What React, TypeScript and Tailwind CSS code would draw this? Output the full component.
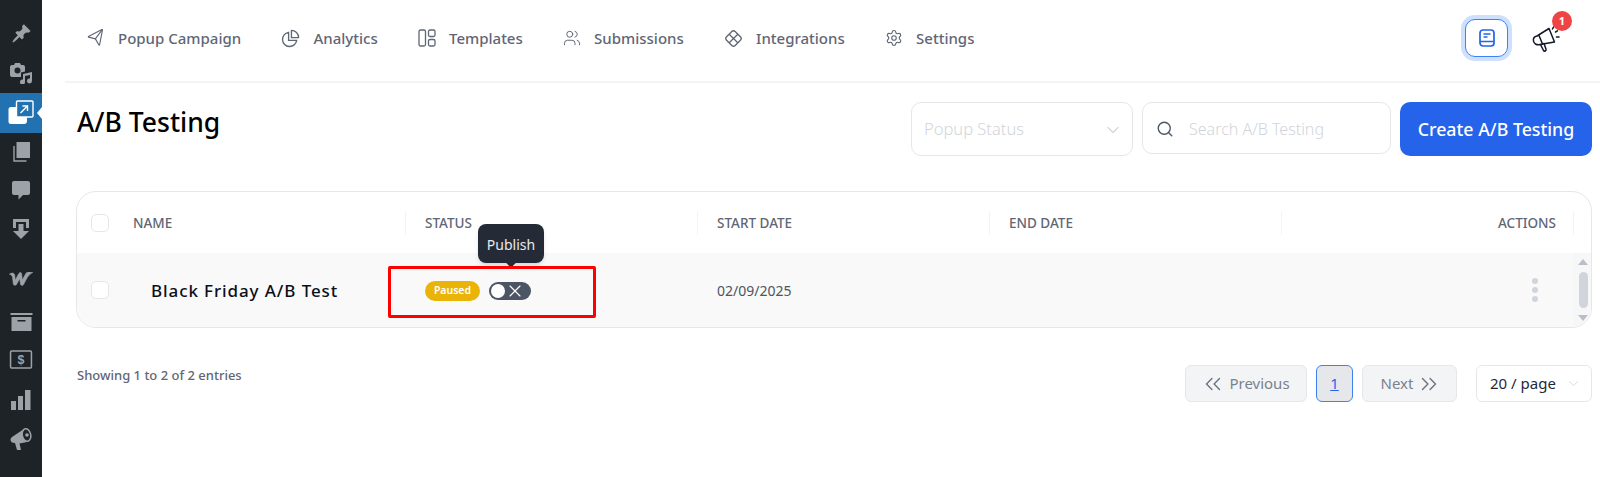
import { ChevronDown, ChevronsLeft, ChevronsRight, Search, Send, Settings, Users, X } from 'lucide-react'

const font = "font-['Noto_Sans',sans-serif]"

function PinIcon() {
  return (
    <svg viewBox="0 0 20 20" className="h-[21px] w-[21px] fill-[#9ca2a7]">
      <path d="M10.44 3.02l1.82-1.82 6.36 6.35-1.83 1.82c-1.05-.68-2.48-.57-3.41.36l-.75.75c-.92.93-1.04 2.35-.35 3.41l-1.83 1.82-2.41-2.41-2.8 2.79c-.42.42-3.38 2.71-3.8 2.29s1.86-3.39 2.28-3.81l2.79-2.79L4.1 9.36l1.83-1.82c1.05.69 2.48.57 3.4-.36l.75-.75c.93-.92 1.05-2.35.36-3.41z" />
    </svg>
  )
}

function MediaIcon() {
  return (
    <svg viewBox="0 0 24 22" className="h-[22px] w-6 fill-[#9ca2a7]">
      <path fillRule="evenodd" d="M3 3h2l1-2h5l1 2h2a2 2 0 0 1 2 2v4.500l-4 1V15H3a2 2 0 0 1-2-2V5a2 2 0 0 1 2-2zm5.500 2.500a3 3 0 1 0 0 6 3 3 0 0 0 0-6z" />
      <path d="M14 12l9-2v9a2.500 2.500 0 1 1-2-2.400v-3.700l-5 1V20a2.500 2.500 0 1 1-2-2.400z" />
    </svg>
  )
}

function ActiveIcon() {
  return (
    <svg viewBox="0 0 26 26" className="h-[26px] w-[26px]">
      <path className="fill-white" d="M3 7h16v14a3 3 0 0 1-3 3H3a2.500 2.500 0 0 1-2.500-2.500v-12A2.500 2.500 0 0 1 3 7z" />
      <rect x="8.500" y="1" width="16.500" height="16" rx="1" className="fill-[#2271b1] stroke-white" strokeWidth="1.400" />
      <path d="M12.500 13l7-7M14.500 6h5v5" className="fill-none stroke-white" strokeWidth="1.400" />
    </svg>
  )
}

function PagesIcon() {
  return (
    <svg viewBox="0 0 20 20" className="h-5 w-5">
      <path className="fill-[#9ca2a7]" d="M5.500 0h13.500v16H5.500z" />
      <path className="fill-none stroke-[#9ca2a7]" strokeWidth="1.400" d="M3 4v15h12.500" />
    </svg>
  )
}

function CommentIcon() {
  return (
    <svg viewBox="0 0 20 20" className="h-5 w-5 fill-[#9ca2a7]">
      <path d="M3 1h14a2 2 0 0 1 2 2v10a2 2 0 0 1-2 2h-5l-4.500 4.500V15H3a2 2 0 0 1-2-2V3a2 2 0 0 1 2-2z" />
    </svg>
  )
}

function ImportIcon() {
  return (
    <svg viewBox="0 0 20 20" className="h-5 w-5 fill-[#9ca2a7]">
      <path d="M2 0h16v9h-3V3H5v6H2z" />
      <path d="M7.500 5h5v7H18l-8 8-8-8h5.500z" />
    </svg>
  )
}

function WooIcon() {
  return (
    <svg viewBox="0 0 26 14" className="h-[14px] w-[25px] fill-[#9ca2a7] stroke-[#9ca2a7]" strokeWidth="0.600">
      <path d="M.5 2C2 .6 4.500.4 5.500 1.800c.6.9.8 3.500 1 6.500 1.200-2.400 2.500-4.900 3.700-7 .8-1.300 2.800-1.300 3 .4l.7 6.600c1.200-2.700 2.600-5.400 4-7.500.9-1.200 4.500-1.400 6.800-.5-2.700 1.300-4.200 3-5.800 5.500-1.200 2-2.600 4.600-3.700 6.900-.7 1.400-2.900 1.300-3.200-.2l-.9-5.800-3.300 6c-.8 1.300-3 1.100-3.300-.4L3.700 5.600C3.400 3.700 2.400 2.600.5 2z" />
    </svg>
  )
}

function ArchiveIcon() {
  return (
    <svg viewBox="0 0 22 18" className="h-[18px] w-[23px] fill-[#9ca2a7]">
      <path d="M0 0h22v2H0z" />
      <path fillRule="evenodd" d="M1 4h20v14H1zM7 7v1.500h8V7z" />
    </svg>
  )
}

function DollarIcon() {
  return (
    <svg viewBox="0 0 24 20" className="h-[19px] w-6">
      <rect x="1" y="1" width="22" height="18" rx="1" className="fill-none stroke-[#9ca2a7]" strokeWidth="1.600" />
      <text x="12" y="15" textAnchor="middle" fontSize="13" fontWeight="700" className="fill-[#9ca2a7]" fontFamily="Liberation Sans">$</text>
    </svg>
  )
}

function ChartIcon() {
  return (
    <svg viewBox="0 0 20 20" className="h-5 w-5 fill-[#9ca2a7]">
      <path d="M0 11h5v9H0zM7 6h5v14H7zM14 0h5.500v20H14z" />
    </svg>
  )
}

function SideMegaphone() {
  return (
    <svg viewBox="0 0 22 22" className="h-[22px] w-[22px]">
      <path className="fill-[#9ca2a7]" d="M14 1L2 9C0 10.500 0 13 2 14.500l3 .5 2 7h4l-1.500-6.500L17 14z" />
      <ellipse cx="16.500" cy="7" rx="4.200" ry="6.300" transform="rotate(-12 16.500 7)" className="fill-[#1d2327] stroke-[#9ca2a7]" strokeWidth="1.500" />
      <circle cx="17" cy="7" r="1.800" className="fill-[#9ca2a7]" />
    </svg>
  )
}

function PieIcon() {
  return (
    <svg viewBox="0 0 20 20" className="h-[19px] w-[19px] fill-none stroke-[#5f6675]" strokeWidth="1.400">
      <path d="M8 3.500a7.500 7.500 0 1 0 8.500 8.500H8z" />
      <path d="M11 1.500A7.500 7.500 0 0 1 18.500 9H11z" />
    </svg>
  )
}

function TemplatesIcon() {
  return (
    <svg viewBox="0 0 18 18" className="h-[18px] w-[18px] fill-none stroke-[#5f6675]" strokeWidth="1.300">
      <rect x="1" y="1" width="6.500" height="16" rx="1.500" />
      <rect x="10.500" y="1" width="6.500" height="6.500" rx="1.500" />
      <rect x="10.500" y="10.500" width="6.500" height="6.500" rx="1.500" />
    </svg>
  )
}

function IntegrationsIcon() {
  return (
    <svg viewBox="0 0 20 20" className="h-[19px] w-[19px] fill-none stroke-[#5f6675]" strokeWidth="1.400">
      <rect x="3.600" y="3.600" width="12.800" height="12.800" rx="2.500" transform="rotate(45 10 10)" />
      <path d="M5.500 5.500l9 9M14.500 5.500l-9 9" />
    </svg>
  )
}

function BookIcon() {
  return (
    <svg viewBox="0 0 20 20" className="h-5 w-5 fill-none stroke-[#2563eb]" strokeWidth="1.700">
      <rect x="3" y="2" width="14" height="16" rx="3" />
      <path d="M3 13.500h14M6.500 6h7M6.500 9h4" />
    </svg>
  )
}

function HornIcon() {
  return (
    <svg viewBox="0 0 30 30" className="h-[30px] w-[30px] fill-none stroke-[#111827]" strokeWidth="1.500" strokeLinejoin="round" strokeLinecap="round">
      <path d="M18 5.500l5.500 13.500L9 21.500c-3 1-6-.5-6.500-3.500-.5-2.500 1-4.500 3.500-5z" />
      <path d="M8 12.500l3.500 8.500" />
      <path d="M9.500 21.500l3 6c.8 1.300 3 .3 2.500-1.200l-2-5.800" />
      <path d="M24.500 9l2-1.200M25.500 14h2.500M21.500 6l1-2" />
    </svg>
  )
}

const navItems = [
  { label: 'Popup Campaign', icon: <Send className="h-[18px] w-[18px] -rotate-[8deg] text-[#5f6675]" strokeWidth={1.5} /> },
  { label: 'Analytics', icon: <PieIcon /> },
  { label: 'Templates', icon: <TemplatesIcon /> },
  { label: 'Submissions', icon: <Users className="h-[18px] w-[18px] text-[#5f6675]" strokeWidth={1.3} /> },
  { label: 'Integrations', icon: <IntegrationsIcon /> },
  { label: 'Settings', icon: <Settings className="h-[18px] w-[18px] text-[#5f6675]" strokeWidth={1.5} /> },
]

const sideItems = [
  { icon: <PinIcon />, className: 'h-[38px]' },
  { icon: <MediaIcon />, className: 'h-[41px]' },
  { icon: <ActiveIcon />, className: 'h-10 bg-[#2271b1] relative', active: true },
  { icon: <PagesIcon />, className: 'h-[37px]' },
  { icon: <CommentIcon />, className: 'h-10' },
  { icon: <ImportIcon />, className: 'h-[38px]' },
  { icon: <WooIcon />, className: 'mt-[11px] h-10' },
  { icon: <ArchiveIcon />, className: 'mt-[3px] h-10' },
  { icon: <DollarIcon />, className: 'h-[34px]' },
  { icon: <ChartIcon />, className: 'h-12' },
  { icon: <SideMegaphone />, className: 'h-[30px]' },
]

function Sidebar() {
  return (
    <aside className="w-[42px] shrink-0 bg-[#1d2327] pt-[14px]">
      {sideItems.map((item, i) => (
        <div key={i} className={`flex items-center justify-center ${item.className}`}>
          {item.icon}
          {item.active && (
            <span className="absolute right-0 top-1/2 h-0 w-0 -translate-y-1/2 border-y-[6px] border-r-[5px] border-y-transparent border-r-white" />
          )}
        </div>
      ))}
    </aside>
  )
}

function TopNav() {
  return (
    <header className="ml-[23px] flex h-[83px] items-center justify-between border-b-2 border-[#f3f4f6] pb-[5px] pl-[22px] pr-[39px]">
      <nav className="flex items-center gap-[40.300px]">
        {navItems.map((item) => (
          <a key={item.label} className="flex items-center gap-[13px] text-[15px] font-medium text-[#5f6675]">
            {item.icon}
            {item.label}
          </a>
        ))}
      </nav>
      <div className="flex items-center gap-[23px]">
        <button className="flex h-[38px] w-[43px] items-center justify-center rounded-[10px] border border-[#3b82f6] bg-white shadow-[0_0_0_4px_#cfe0fd]">
          <BookIcon />
        </button>
        <div className="relative h-[30px] w-[30px]">
          <HornIcon />
          <span className="absolute -top-[12px] left-[21px] flex h-5 w-5 items-center justify-center rounded-full bg-[#ef4444] text-[11px] font-bold text-white">
            1
          </span>
        </div>
      </div>
    </header>
  )
}

function Toolbar() {
  return (
    <div className="flex items-start justify-between pl-[35px] pr-2 pt-[19px]">
      <h1 className="pt-[2px] text-[26.500px] font-medium leading-[36px] text-black">A/B Testing</h1>
      <div className="flex gap-[9px]">
        <div className="flex h-[54px] w-[222px] items-center justify-between rounded-[10px] border border-[#e5e7eb] pl-[12px] pr-[9px] pt-[1px] text-[16.500px] font-light text-[#d1d5db]">
          Popup Status
          <ChevronDown className="h-[20px] w-[20px] text-[#9ca3af]" strokeWidth={1} />
        </div>
        <div className="flex h-[52px] w-[249px] items-center gap-[15px] rounded-[10px] border border-[#e5e7eb] px-[13px] pt-[1px] text-[16px] font-light text-[#d1d5db]">
          <Search className="h-[18px] w-[18px] text-[#4b5563]" strokeWidth={1.8} />
          Search A/B Testing
        </div>
        <button className="flex h-[54px] w-[192px] items-center justify-center rounded-[10px] bg-[#2563eb] text-[17.800px] font-medium text-white">
          Create A/B Testing
        </button>
      </div>
    </div>
  )
}

function Scrollbar() {
  return (
    <div className="flex w-[17px] flex-col items-center justify-between border-l border-[#f3f4f6] bg-[#f7f7f8] py-[6px]">
      <span className="h-0 w-0 border-x-[5px] border-b-[6px] border-x-transparent border-b-[#b9bec7]" />
      <span className="h-[36px] w-[9px] rounded-full bg-[#d1d5db]" />
      <span className="h-0 w-0 border-x-[5px] border-t-[6px] border-x-transparent border-t-[#b9bec7]" />
    </div>
  )
}

function Table() {
  const headCell = 'flex h-6 w-[292px] items-center border-l border-[#f3f4f6] pl-[19px]'
  return (
    <div className="ml-[34px] mr-2 mt-[35px] h-[137px] overflow-hidden rounded-[20px] border border-[#e5e7eb]">
      <div className="flex h-[61px] items-center pt-[1px] text-[13.500px] font-medium text-[#5f6675]">
        <span className="ml-[14px] h-[18px] w-[18px] rounded-[5px] border border-[#e5e7eb] bg-white" />
        <span className="ml-[24px] w-[272px]">NAME</span>
        <span className={headCell}>STATUS</span>
        <span className={headCell}>START DATE</span>
        <span className={headCell}>END DATE</span>
        <span className="flex h-6 w-[293px] items-center justify-end border-x border-[#f3f4f6] pr-[17px]">ACTIONS</span>
      </div>
      <div className="flex h-[74px]">
        <div className="flex flex-1 items-center bg-[#f9f9f9]">
          <span className="ml-[14px] h-[18px] w-[18px] rounded-[5px] border border-[#e5e7eb] bg-white" />
          <span className="ml-[42px] w-[255px] pt-[1px] text-[17px] font-medium tracking-[0.9px] text-[#0b0f19]">Black Friday A/B Test</span>
          <div className="flex w-[292px] items-center pl-[19px] pt-[1px]">
            <span className="flex h-5 w-[55px] items-center justify-center rounded-full bg-[#eab308] text-[10.500px] font-semibold text-white">
              Paused
            </span>
            <span className="ml-[9px] flex h-[18px] w-[42px] items-center rounded-full bg-[#4b5563] pl-[2px]">
              <span className="h-[14px] w-[14px] shrink-0 rounded-full bg-white" />
              <X className="h-5 w-5 shrink-0 text-white" strokeWidth={1.4} />
            </span>
          </div>
          <span className="w-[292px] pl-[19px] pt-[1px] text-[14px] text-[#4b5563]">02/09/2025</span>
          <span className="w-[292px]" />
          <span className="flex flex-1 justify-end pr-[36px]">
            <span className="flex flex-col gap-[3px]">
              <span className="h-[6px] w-[6px] rounded-full bg-[#d1d5db]" />
              <span className="h-[6px] w-[6px] rounded-full bg-[#d1d5db]" />
              <span className="h-[6px] w-[6px] rounded-full bg-[#d1d5db]" />
            </span>
          </span>
        </div>
        <Scrollbar />
      </div>
    </div>
  )
}

function Footer() {
  return (
    <div className="flex items-start justify-between pl-[35px] pr-2 pt-[37px]">
      <span className="pt-[1px] text-[13px] font-medium text-[#5f6675]">Showing 1 to 2 of 2 entries</span>
      <div className="flex items-center">
        <button className="flex h-[37px] w-[122px] items-center justify-center gap-[3px] rounded-md border border-[#e5e7eb] bg-[#f3f4f6] pr-[2px] text-[15px] text-[#7b818d]">
          <ChevronsLeft className="h-[26px] w-[26px] text-[#6b7280]" strokeWidth={1.3} />
          Previous
        </button>
        <button className="ml-[9px] flex h-[37px] w-[37px] items-center justify-center rounded-md border border-[#3b82f6] bg-[#e5e7eb] text-[15px] text-[#2563eb] underline">
          1
        </button>
        <button className="ml-[9px] flex h-[37px] w-[95px] items-center justify-center gap-[3px] rounded-md border border-[#e5e7eb] bg-[#f3f4f6] pl-[4px] text-[15px] text-[#7b818d]">
          Next
          <ChevronsRight className="h-[26px] w-[26px] text-[#6b7280]" strokeWidth={1.3} />
        </button>
        <div className="ml-[19px] flex h-[37px] w-[116px] items-center justify-between rounded-md border border-[#e5e7eb] bg-white pl-[13px] pr-[9px] text-[15px] text-[#1f2937]">
          20 / page
          <ChevronDown className="h-[17px] w-[17px] text-[#d1d5db]" strokeWidth={1.2} />
        </div>
      </div>
    </div>
  )
}

export default function App() {
  return (
    <div className={`relative flex h-[477px] w-[1600px] overflow-hidden bg-white ${font}`}>
      <Sidebar />
      <main className="min-w-0 flex-1">
        <TopNav />
        <Toolbar />
        <Table />
        <Footer />
      </main>
      {/* tooltip and the red annotation frame sit over the table */}
      <div className="absolute left-[478px] top-[224px] flex h-[39px] w-[66px] items-center justify-center rounded-lg bg-[#252a37] pt-[1px] text-[14px] text-white/90 shadow-md">
        Publish
        <span className="absolute -bottom-[3px] left-1/2 h-2 w-2 -translate-x-1/2 rotate-45 bg-[#252a37]" />
      </div>
      <div className="absolute left-[388px] top-[266px] h-[52px] w-[208px] rounded-[2px] border-[3px] border-[#fe0000]" />
    </div>
  )
}
